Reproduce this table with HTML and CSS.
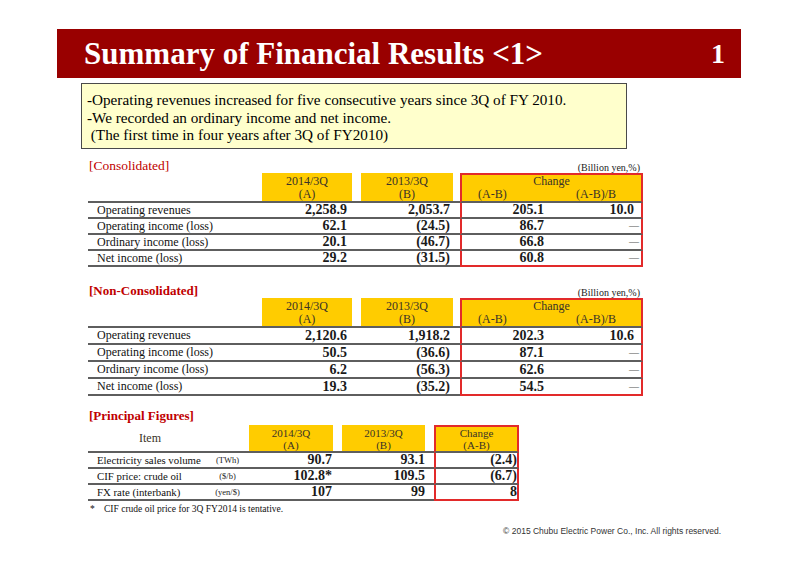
FILE: index.html
```html
<!DOCTYPE html>
<html lang="en">
<head>
<meta charset="utf-8">
<title>Summary of Financial Results</title>
<link rel="stylesheet" href="styles.css">
</head>
<body>
<div class="slide">
  <header class="titlebar">
    <h1 class="title">Summary of Financial Results &lt;1&gt;</h1>
    <span class="pageno">1</span>
  </header>

  <div class="summary">
    <p>-Operating revenues increased for five consecutive years since 3Q of FY 2010.</p>
    <p>-We recorded an ordinary income and net income.</p>
    <p>&nbsp;(The first time in four years after 3Q of FY2010)</p>
  </div>

  <section class="block block-cons">
    <div class="caption">
      <h2 class="cap-title regular">[Consolidated]</h2>
      <span class="unit">(Billion yen,%)</span>
    </div>
    <table class="fin t-main">
      <colgroup>
        <col class="c-label"><col class="c-a"><col class="c-gap1"><col class="c-b"><col class="c-gap2"><col class="c-c1"><col class="c-c2">
      </colgroup>
      <thead>
        <tr>
          <th rowspan="2" class="hb"></th>
          <th rowspan="2" class="yel hb">2014/3Q<br>(A)</th>
          <th rowspan="2" class="hb"></th>
          <th rowspan="2" class="yel hb">2013/3Q<br>(B)</th>
          <th rowspan="2" class="hb"></th>
          <th colspan="2" class="yel chg-top">Change</th>
        </tr>
        <tr>
          <th class="yel hb c1 sub1">(A-B)</th>
          <th class="yel hb c2 sub2">(A-B)/B</th>
        </tr>
      </thead>
      <tbody>
        <tr><td class="lbl">Operating revenues</td><td class="num">2,258.9</td><td></td><td class="num">2,053.7</td><td></td><td class="num c1">205.1</td><td class="num c2">10.0</td></tr>
        <tr><td class="lbl">Operating income (loss)</td><td class="num">62.1</td><td></td><td class="num neg">(24.5)</td><td></td><td class="num c1">86.7</td><td class="dash c2">—</td></tr>
        <tr><td class="lbl">Ordinary income (loss)</td><td class="num">20.1</td><td></td><td class="num neg">(46.7)</td><td></td><td class="num c1">66.8</td><td class="dash c2">—</td></tr>
        <tr class="last"><td class="lbl">Net income (loss)</td><td class="num">29.2</td><td></td><td class="num neg">(31.5)</td><td></td><td class="num c1">60.8</td><td class="dash c2">—</td></tr>
      </tbody>
    </table>
  </section>

  <section class="block block-non">
    <div class="caption">
      <h2 class="cap-title">[Non-Consolidated]</h2>
      <span class="unit">(Billion yen,%)</span>
    </div>
    <table class="fin t-main t-tall">
      <colgroup>
        <col class="c-label"><col class="c-a"><col class="c-gap1"><col class="c-b"><col class="c-gap2"><col class="c-c1"><col class="c-c2">
      </colgroup>
      <thead>
        <tr>
          <th rowspan="2" class="hb"></th>
          <th rowspan="2" class="yel hb">2014/3Q<br>(A)</th>
          <th rowspan="2" class="hb"></th>
          <th rowspan="2" class="yel hb">2013/3Q<br>(B)</th>
          <th rowspan="2" class="hb"></th>
          <th colspan="2" class="yel chg-top">Change</th>
        </tr>
        <tr>
          <th class="yel hb c1 sub1">(A-B)</th>
          <th class="yel hb c2 sub2">(A-B)/B</th>
        </tr>
      </thead>
      <tbody>
        <tr><td class="lbl">Operating revenues</td><td class="num">2,120.6</td><td></td><td class="num">1,918.2</td><td></td><td class="num c1">202.3</td><td class="num c2">10.6</td></tr>
        <tr><td class="lbl">Operating income (loss)</td><td class="num">50.5</td><td></td><td class="num neg">(36.6)</td><td></td><td class="num c1">87.1</td><td class="dash c2">—</td></tr>
        <tr><td class="lbl">Ordinary income (loss)</td><td class="num">6.2</td><td></td><td class="num neg">(56.3)</td><td></td><td class="num c1">62.6</td><td class="dash c2">—</td></tr>
        <tr class="last"><td class="lbl">Net income (loss)</td><td class="num">19.3</td><td></td><td class="num neg">(35.2)</td><td></td><td class="num c1">54.5</td><td class="dash c2">—</td></tr>
      </tbody>
    </table>
  </section>

  <section class="block block-prin">
    <div class="caption caption-prin">
      <h2 class="cap-title">[Principal Figures]</h2>
    </div>
    <table class="fin t-prin">
      <colgroup>
        <col class="p-label"><col class="p-unit"><col class="p-a"><col class="p-gap"><col class="p-b"><col class="p-gap"><col class="p-c">
      </colgroup>
      <thead>
        <tr>
          <th class="hb item">Item</th>
          <th class="hb"></th>
          <th class="yel hb">2014/3Q<br>(A)</th>
          <th class="hb"></th>
          <th class="yel hb">2013/3Q<br>(B)</th>
          <th class="hb"></th>
          <th class="yel hb chg-top cc">Change<br>(A-B)</th>
        </tr>
      </thead>
      <tbody>
        <tr><td class="lbl">Electricity sales volume</td><td class="u">(TWh)</td><td class="num">90.7</td><td></td><td class="num">93.1</td><td></td><td class="num cc">(2.4)</td></tr>
        <tr><td class="lbl">CIF price: crude oil</td><td class="u">($/b)</td><td class="num">102.8*</td><td></td><td class="num">109.5</td><td></td><td class="num cc">(6.7)</td></tr>
        <tr class="last"><td class="lbl">FX rate (interbank)</td><td class="u">(yen/$)</td><td class="num">107</td><td></td><td class="num">99</td><td></td><td class="num cc">8</td></tr>
      </tbody>
    </table>
    <p class="footnote"><span class="star">*</span>CIF crude oil price for 3Q FY2014 is tentative.</p>
  </section>

  <footer class="copyright">&copy; 2015 Chubu Electric Power Co., Inc. All rights reserved.</footer>
</div>
</body>
</html>
```

FILE: styles.css
```css
* { box-sizing: border-box; }

html, body {
  margin: 0;
  padding: 0;
  background: #ffffff;
}

body {
  font-family: "Liberation Serif", "Times New Roman", serif;
  color: #000;
}

.slide {
  width: 800px;
  height: 566px;
  padding: 29px 0 0 57px;
  overflow: hidden;
}

/* Title bar */
.titlebar {
  width: 684px;
  height: 49px;
  background: #990000;
  display: flex;
  align-items: center;
  justify-content: space-between;
  padding: 0 16px 0 27px;
  color: #ffffff;
}

.title {
  margin: 0;
  font-size: 31px;
  font-weight: bold;
  line-height: 1;
}

.pageno {
  font-size: 28px;
  font-weight: bold;
  line-height: 1;
}

/* Summary box */
.summary {
  margin: 5px 0 0 24px;
  width: 546px;
  height: 66px;
  border: 1px solid #4a4a4a;
  background: #ffffcc;
  padding: 7px 0 0 5px;
  font-size: 15.2px;
  line-height: 17.5px;
}

.summary p {
  margin: 0;
  white-space: nowrap;
}

/* Blocks */
.block {
  margin-left: 31px;
}

.block-cons { margin-top: 10px; }
.block-non { margin-top: 18px; }
.block-prin { margin-top: 13px; }

.caption {
  width: 555px;
  display: flex;
  justify-content: space-between;
  align-items: flex-end;
  height: 14px;
}

.block-non .caption { height: 13px; }

.caption-prin {
  width: 431px;
  margin-bottom: 2px;
}

.cap-title {
  margin: 0;
  font-size: 13px;
  line-height: 14px;
  font-weight: bold;
  color: #c00000;
  padding-left: 1px;
}

.cap-title.regular { font-weight: normal; font-size: 13.5px; }

.unit {
  font-size: 10px;
  line-height: 10px;
  padding-right: 3px;
  color: #222;
}

/* Tables */
.fin {
  border-collapse: separate;
  border-spacing: 0;
  table-layout: fixed;
}

.t-main { width: 555px; }
.t-prin { width: 431px; }

.c-label { width: 174px; }
.c-a { width: 90px; }
.c-gap1 { width: 9px; }
.c-b { width: 92px; }
.c-gap2 { width: 7px; }
.c-c1 { width: 88px; }
.c-c2 { width: 95px; }

.p-label { width: 124px; }
.p-unit { width: 37px; }
.p-a { width: 84px; }
.p-gap { width: 9px; }
.p-b { width: 83px; }
.p-c { width: 85px; }

.fin th,
.fin td {
  padding: 0;
  white-space: nowrap;
}

.fin th {
  font-weight: normal;
  font-size: 12px;
  line-height: 13px;
  color: #3a3327;
  text-align: center;
  vertical-align: top;
}

.t-main thead tr:first-child th { padding-top: 2px; }

.fin .yel { background: #ffcc00; }

.fin .hb { border-bottom: 2px solid #5e5e5e; }

.fin th.chg-top {
  box-shadow: inset 0 2px 0 #e22a2a;
  border-left: 2px solid #e22a2a;
  border-right: 2px solid #e22a2a;
}

.fin th.sub1 { text-align: left; padding-left: 16px; }
.fin th.sub2 { text-align: left; padding-left: 28px; }

.fin .c1 { border-left: 2px solid #e22a2a; }
.fin .c2 { border-right: 2px solid #e22a2a; }
.fin .cc { border-left: 2px solid #e22a2a; border-right: 2px solid #e22a2a; }

.fin td {
  border-bottom: 2px solid #5e5e5e;
  line-height: 14px;
  font-size: 14px;
  vertical-align: middle;
}

.t-tall td { line-height: 15px; }

.fin tr.last td.c1,
.fin tr.last td.c2,
.fin tr.last td.cc {
  border-bottom-color: #e22a2a;
}

.fin td.lbl {
  font-size: 12px;
  padding-left: 9px;
  color: #111;
}

.fin td.num {
  text-align: right;
  font-weight: bold;
  color: #1a1a1a;
}

.t-main td:nth-child(2) { padding-right: 5px; }
.t-main td:nth-child(4) { padding-right: 3px; }
.t-main td:nth-child(6) { padding-right: 4px; }
.t-main td.num.c2 { padding-right: 7px; }

.fin td.dash {
  text-align: right;
  font-size: 10px;
  color: #555;
  padding-right: 2px;
}

/* Principal table */
.t-prin th {
  font-size: 11px;
  line-height: 12px;
  padding-top: 2px;
}
.t-prin th.item { vertical-align: middle; font-size: 12px; padding-top: 0; }
.t-prin td.lbl { font-size: 10.8px; padding-left: 9px; }
.t-prin td.u {
  font-size: 8.5px;
  text-align: center;
  padding-right: 6px;
  color: #222;
}
.t-prin td:nth-child(3) { padding-right: 1px; }
.t-prin td:nth-child(5) { padding-right: 0; }
.t-prin td.cc { padding-right: 0; }

.footnote {
  margin: 2px 0 0 0;
  font-size: 9.5px;
  line-height: 12px;
  color: #111;
}

.footnote .star {
  display: inline-block;
  width: 16px;
  padding-left: 2px;
}

.copyright {
  margin-top: 10px;
  width: 684px;
  padding-right: 20px;
  text-align: right;
  font-family: "Liberation Sans", Arial, sans-serif;
  font-size: 8.5px;
  line-height: 12px;
  color: #333;
}
```
